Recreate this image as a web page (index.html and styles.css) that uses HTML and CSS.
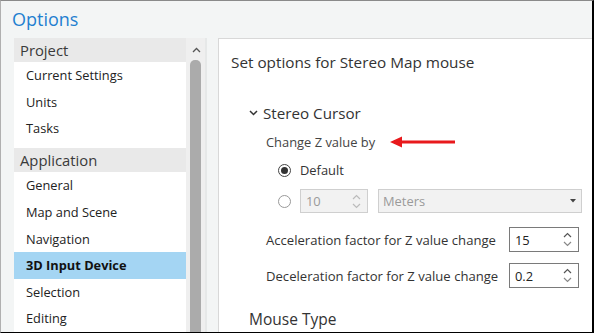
FILE: index.html
```html
<!DOCTYPE html>
<html>
<head>
<meta charset="utf-8">
<link rel="stylesheet" href="styles.css">
</head>
<body>
<div class="frame">
  <div class="title">Options</div>
  <div class="main">
    <div class="sidebar">
      <div class="list">
        <div class="group-head">Project</div>
        <div class="item">Current Settings</div>
        <div class="item">Units</div>
        <div class="item">Tasks</div>
        <div class="group-gap"></div>
        <div class="group-head">Application</div>
        <div class="item">General</div>
        <div class="item">Map and Scene</div>
        <div class="item">Navigation</div>
        <div class="item selected">3D Input Device</div>
        <div class="item">Selection</div>
        <div class="item">Editing</div>
      </div>
      <div class="scrollbar">
        <svg class="sb-up" width="9" height="6" viewBox="0 0 9 6"><path d="M1 5 L4.5 1.5 L8 5" fill="none" stroke="#555" stroke-width="1.3"/></svg>
        <div class="thumb"></div>
      </div>
      <div class="sep"></div>
    </div>
    <div class="panel">
      <div class="panel-title">Set options for Stereo Map mouse</div>
      <div class="section">
        <div class="section-head">
          <svg class="chev" width="9" height="6" viewBox="0 0 9 6"><path d="M1 1 L4.5 4.5 L8 1" fill="none" stroke="#333" stroke-width="1.5"/></svg>
          <span>Stereo Cursor</span>
        </div>
        <div class="body">
          <div class="label-row">
            <span>Change Z value by</span>
            <svg class="arrow" width="66" height="12" viewBox="0 0 66 12"><path d="M0 6 L12 0.5 L12 4.5 L65 4.5 L65 7.5 L12 7.5 L12 11.5 Z" fill="#e8191c"/></svg>
          </div>
          <div class="radio-row first">
            <span class="radio checked"></span>
            <span class="radio-label">Default</span>
          </div>
          <div class="radio-row second">
            <span class="radio"></span>
            <div class="spin disabled small">
              <span>10</span>
              <span class="spin-arrows">
                <svg width="9" height="6" viewBox="0 0 9 6"><path d="M1 5 L4.5 1.5 L8 5" fill="none" stroke="#bbb" stroke-width="1.2"/></svg>
                <svg width="9" height="6" viewBox="0 0 9 6"><path d="M1 1 L4.5 4.5 L8 1" fill="none" stroke="#bbb" stroke-width="1.2"/></svg>
              </span>
            </div>
            <div class="select disabled">
              <span>Meters</span>
              <svg width="6" height="4" viewBox="0 0 6 4"><path d="M0 0 L6 0 L3 3.5 Z" fill="#444"/></svg>
            </div>
          </div>
          <div class="field-row accel">
            <span class="field-label">Acceleration factor for Z value change</span>
            <div class="spin">
              <span>15</span>
              <span class="spin-arrows">
                <svg width="9" height="6" viewBox="0 0 9 6"><path d="M1 5 L4.5 1.5 L8 5" fill="none" stroke="#555" stroke-width="1.2"/></svg>
                <svg width="9" height="6" viewBox="0 0 9 6"><path d="M1 1 L4.5 4.5 L8 1" fill="none" stroke="#888" stroke-width="1.2"/></svg>
              </span>
            </div>
          </div>
          <div class="field-row decel">
            <span class="field-label">Deceleration factor for Z value change</span>
            <div class="spin">
              <span>0.2</span>
              <span class="spin-arrows">
                <svg width="9" height="6" viewBox="0 0 9 6"><path d="M1 5 L4.5 1.5 L8 5" fill="none" stroke="#555" stroke-width="1.2"/></svg>
                <svg width="9" height="6" viewBox="0 0 9 6"><path d="M1 1 L4.5 4.5 L8 1" fill="none" stroke="#888" stroke-width="1.2"/></svg>
              </span>
            </div>
          </div>
        </div>
        <div class="section-next">Mouse Type</div>
      </div>
    </div>
  </div>
</div>
</body>
</html>
```
FILE: styles.css
```css
html, body {
  margin: 0;
  padding: 0;
}
body {
  width: 594px;
  height: 333px;
  overflow: hidden;
  font-family: "Open Sans", "Noto Sans", sans-serif;
  color: #333;
}
.frame {
  box-sizing: border-box;
  width: 594px;
  height: 333px;
  background: #f3f5f5;
  border-top: 1px solid #8a8a8a;
  border-left: 1px solid #b0b0b0;
  border-right: 2px solid #000;
  border-bottom: 1px solid #000;
  overflow: hidden;
  display: flex;
  flex-direction: column;
}
.title {
  height: 37px;
  padding-left: 11px;
  font-size: 18px;
  line-height: 36px;
  color: #1f80d0;
}
.main {
  display: flex;
  flex: 1;
  min-height: 0;
}
.sidebar {
  display: flex;
  margin-left: 13px;
  flex: none;
}
.list {
  width: 172px;
  background: #fff;
  display: flex;
  flex-direction: column;
}
.group-head {
  height: 24px;
  line-height: 24px;
  background: #e9e9e9;
  padding-left: 6px;
  font-size: 14.8px;
  color: #3a3a3a;
}
.item {
  height: 26.6px;
  line-height: 26.6px;
  padding-left: 12px;
  font-size: 12.8px;
  color: #222;
}
.item.selected {
  background: #a4d5f3;
  font-weight: 700;
  color: #111;
}
.group-gap {
  height: 7px;
}
.scrollbar {
  width: 19px;
  background: #efefef;
  display: flex;
  flex-direction: column;
  align-items: flex-start;
}
.sb-up {
  margin: 9px 0 0 6px;
}
.thumb {
  margin: 7px 0 0 4px;
  width: 11px;
  flex: 1;
  background: #ababab;
  border-radius: 5px 5px 0 0;
}
.sep {
  width: 2px;
  background: #e6e8e8;
  margin-right: 11px;
}
.panel {
  flex: none;
  width: 420px;
  background: #fff;
  border-top: 1px solid #d8d8d8;
  border-left: 1px solid #d8d8d8;
  padding-left: 12px;
}
.panel-title {
  margin-top: 13px;
  height: 20px;
  line-height: 20px;
  font-size: 15.3px;
  color: #333;
}
.section {
  padding-left: 18px;
  margin-top: 31px;
}
.section-head {
  display: flex;
  align-items: center;
  height: 20px;
  font-size: 15.2px;
  color: #333;
}
.chev {
  margin-right: 5px;
}
.body {
  padding-left: 17px;
}
.label-row {
  margin-top: 10px;
  height: 18px;
  display: flex;
  align-items: center;
  font-size: 12.9px;
  color: #444;
}
.arrow {
  margin-left: 15px;
}
.radio-row {
  display: flex;
  align-items: center;
  height: 24px;
  padding-left: 12px;
}
.radio-row.first {
  margin-top: 7px;
}
.radio-row.second {
  margin-top: 7px;
}
.radio {
  box-sizing: border-box;
  width: 13px;
  height: 13px;
  border-radius: 50%;
  border: 1px solid #999;
  background: #fff;
  display: flex;
  align-items: center;
  justify-content: center;
  margin-right: 9px;
}
.radio.checked {
  border-color: #444;
}
.radio.checked::after {
  content: "";
  width: 7px;
  height: 7px;
  border-radius: 50%;
  background: #333;
}
.radio-label {
  font-size: 12.9px;
  color: #333;
}
.spin {
  box-sizing: border-box;
  display: flex;
  align-items: center;
  justify-content: space-between;
  width: 70px;
  height: 24px;
  border: 1px solid #7a7a7a;
  background: #fff;
  padding: 0 6px 0 5px;
  font-size: 12.9px;
  color: #222;
}
.spin.small {
  width: 68px;
}
.spin.disabled {
  border-color: #cfcfcf;
  background: #f2f2f2;
  color: #9a9a9a;
}
.spin-arrows {
  display: flex;
  flex-direction: column;
  gap: 3px;
}
.spin-arrows svg {
  display: block;
}
.select {
  box-sizing: border-box;
  margin-left: 10px;
  width: 204px;
  height: 24px;
  display: flex;
  align-items: center;
  justify-content: space-between;
  padding: 0 5px 0 4px;
  border: 1px solid #cfcfcf;
  background: #f2f2f2;
  font-size: 12.9px;
  color: #9a9a9a;
}
.field-row {
  display: flex;
  align-items: center;
  justify-content: space-between;
  width: 313px;
}
.field-row.accel {
  margin-top: 14px;
}
.field-row.decel {
  margin-top: 11px;
}
.field-row .spin {
  height: 25px;
}
.field-label {
  font-size: 13.1px;
  color: #333;
}
.section-next {
  margin-top: 20px;
  font-size: 15.5px;
  line-height: 22px;
  color: #333;
}
```
